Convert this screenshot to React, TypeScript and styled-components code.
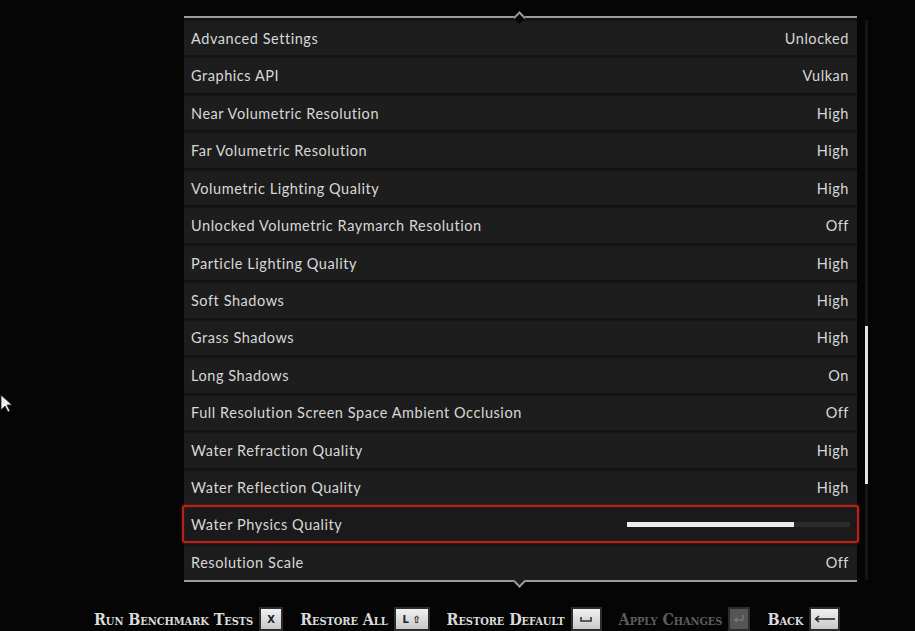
import React from "react";
import styled, { createGlobalStyle } from "styled-components";

const GlobalStyle = createGlobalStyle`
  html, body {
    margin: 0;
    padding: 0;
    background: #040404;
  }
`;

const Screen = styled.div`
  position: relative;
  width: 915px;
  height: 631px;
  overflow: hidden;
  background: #050505;
  display: flex;
  flex-direction: column;
`;

const Main = styled.div`
  display: flex;
  align-items: flex-start;
  padding: 16px 0 0 184px;
`;

const Panel = styled.div`
  width: 673px;
  display: flex;
  flex-direction: column;
`;

const Rule = styled.div<{ $down?: boolean }>`
  position: relative;
  height: 2px;
  background: #9c9c9c;

  &::after {
    content: "";
    position: absolute;
    left: 331px;
    top: -3px;
    width: 7px;
    height: 7px;
    border-left: 2px solid #9c9c9c;
    border-top: 2px solid #9c9c9c;
    background: ${(p) => (p.$down ? "#1c1c1c" : "#050505")};
    transform: rotate(${(p) => (p.$down ? "225deg" : "45deg")});
  }
`;

const List = styled.div`
  display: flex;
  flex-direction: column;
`;

const Row = styled.div<{ $selected?: boolean }>`
  height: 37.47px;
  box-sizing: border-box;
  display: flex;
  align-items: center;
  justify-content: space-between;
  padding: 3px 8px 0 7px;
  background: linear-gradient(#131313 0, #131313 2px, #1d1d1d 4px, #1d1d1d 100%);
  font-family: Lato, "Open Sans", sans-serif;
  font-size: 14.5px;
  letter-spacing: 0.55px;
  color: #d8d8d8;
  ${(p) =>
    p.$selected &&
    `
    position: relative;
    margin: 0 -2px;
    padding: 1px 9px 0 7px;
    border: 2px solid #b3251b;
    border-radius: 3px;
    background: #1a1a1a;
    box-shadow: 0 0 3px rgba(200, 30, 20, 0.6), inset 0 0 2px rgba(200, 30, 20, 0.5);
  `}
`;

const Value = styled.span``;

const Slider = styled.div`
  width: 223px;
  height: 5px;
  margin-right: -2px;
  background: #2b2b2b;
  display: flex;
`;

const SliderFill = styled.div`
  height: 100%;
  background: #ededed;
`;

const ScrollTrack = styled.div`
  margin: 4px 0 0 8px;
  width: 3px;
  height: 560px;
  background: #151515;
  display: flex;
  flex-direction: column;
`;

const ScrollThumb = styled.div`
  margin-top: 306px;
  height: 158px;
  background: #e4e4e4;
`;

const Footer = styled.div`
  display: flex;
  align-items: center;
  padding: 25px 0 0 94px;
`;

const Action = styled.div<{ $disabled?: boolean }>`
  display: flex;
  align-items: center;
  margin-right: 17px;
  font-family: "DejaVu Serif Condensed", "DejaVu Serif", serif;
  font-weight: 700;
  font-variant: small-caps;
  font-size: 16px;
  letter-spacing: -0.1px;
  white-space: nowrap;
  color: ${(p) => (p.$disabled ? "#5c5c5c" : "#dadada")};
`;

const Key = styled.span<{ $w: number; $disabled?: boolean }>`
  display: inline-flex;
  align-items: center;
  justify-content: center;
  box-sizing: border-box;
  width: ${(p) => p.$w}px;
  height: 24px;
  margin-left: 6px;
  border: 2px solid #2c2c2c;
  background: ${(p) =>
    p.$disabled ? "#555" : "linear-gradient(#f0f0f0, #c8c8c8)"};
  color: ${(p) => (p.$disabled ? "#888" : "#222")};
  font-family: "DejaVu Sans", sans-serif;
  font-size: 10px;
  font-weight: 700;
  font-variant: normal;
  letter-spacing: 0;
`;

const Cursor = styled.svg`
  position: absolute;
  left: 0;
  top: 394px;
`;

type Setting = { label: string; value?: string; slider?: number };

const settings: Setting[] = [
  { label: "Advanced Settings", value: "Unlocked" },
  { label: "Graphics API", value: "Vulkan" },
  { label: "Near Volumetric Resolution", value: "High" },
  { label: "Far Volumetric Resolution", value: "High" },
  { label: "Volumetric Lighting Quality", value: "High" },
  { label: "Unlocked Volumetric Raymarch Resolution", value: "Off" },
  { label: "Particle Lighting Quality", value: "High" },
  { label: "Soft Shadows", value: "High" },
  { label: "Grass Shadows", value: "High" },
  { label: "Long Shadows", value: "On" },
  { label: "Full Resolution Screen Space Ambient Occlusion", value: "Off" },
  { label: "Water Refraction Quality", value: "High" },
  { label: "Water Reflection Quality", value: "High" },
  { label: "Water Physics Quality", slider: 0.75 },
  { label: "Resolution Scale", value: "Off" },
];

const SpaceGlyph = () => (
  <svg width="12" height="8" viewBox="0 0 12 8">
    <path d="M1 2v4h10V2" fill="none" stroke="#333" strokeWidth="1.6" />
  </svg>
);

const EnterGlyph = () => (
  <svg width="12" height="10" viewBox="0 0 12 10">
    <path d="M10 1v5H2M4 4 2 6l2 2" fill="none" stroke="#777" strokeWidth="1.4" />
  </svg>
);

const BackGlyph = () => (
  <svg width="22" height="8" viewBox="0 0 22 8">
    <path d="M21 4H2M5 1 1.5 4 5 7" fill="none" stroke="#222" strokeWidth="1.4" />
  </svg>
);

export default function App() {
  return (
    <Screen>
      <GlobalStyle />
      <Main>
        <Panel>
          <Rule />
          <List>
            {settings.map((s) => (
              <Row key={s.label} $selected={s.slider !== undefined}>
                <span>{s.label}</span>
                {s.slider !== undefined ? (
                  <Slider>
                    <SliderFill style={{ width: `${s.slider * 100}%` }} />
                  </Slider>
                ) : (
                  <Value>{s.value}</Value>
                )}
              </Row>
            ))}
          </List>
          <Rule $down />
        </Panel>
        <ScrollTrack>
          <ScrollThumb />
        </ScrollTrack>
      </Main>
      <Footer>
        <Action>
          Run Benchmark Tests
          <Key $w={24}>X</Key>
        </Action>
        <Action>
          Restore All
          <Key $w={36}>L ⇧</Key>
        </Action>
        <Action>
          Restore Default
          <Key $w={31}>
            <SpaceGlyph />
          </Key>
        </Action>
        <Action $disabled>
          Apply Changes
          <Key $w={22} $disabled>
            <EnterGlyph />
          </Key>
        </Action>
        <Action>
          Back
          <Key $w={31}>
            <BackGlyph />
          </Key>
        </Action>
      </Footer>
      <Cursor width="12" height="20" viewBox="0 0 12 20">
        <path d="M1 1v15l4-4 3 6 2-1-3-6h5z" fill="#f2f2f2" stroke="#222" strokeWidth="0.8" />
      </Cursor>
    </Screen>
  );
}
